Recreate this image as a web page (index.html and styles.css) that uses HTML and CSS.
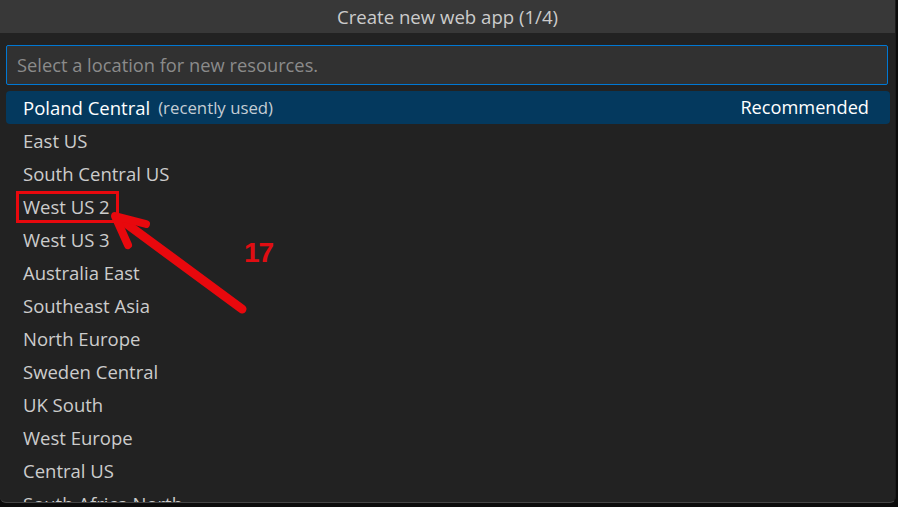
FILE: index.html
```html
<!DOCTYPE html>
<html>
<head>
<meta charset="utf-8">
<link rel="stylesheet" href="styles.css">
</head>
<body>
<div class="widget">
  <div class="title">Create new web app (1/4)</div>
  <div class="content">
    <div class="input">Select a location for new resources.</div>
    <ul class="list">
      <li class="item selected"><span class="label">Poland Central</span><span class="desc">(recently used)</span><span class="tag">Recommended</span></li>
      <li class="item">East US</li>
      <li class="item">South Central US</li>
      <li class="item">West US 2</li>
      <li class="item">West US 3</li>
      <li class="item">Australia East</li>
      <li class="item">Southeast Asia</li>
      <li class="item">North Europe</li>
      <li class="item">Sweden Central</li>
      <li class="item">UK South</li>
      <li class="item">West Europe</li>
      <li class="item">Central US</li>
      <li class="item">South Africa North</li>
    </ul>
  </div>
</div>
<div class="annot-box"></div>
<div class="annot-num">17</div>
<svg class="annot-arrow" width="898" height="507" viewBox="0 0 898 507">
  <line x1="242" y1="309" x2="120" y2="219" stroke="#e8080d" stroke-width="9" stroke-linecap="round"/>
  <polyline points="146,224 115,216 128,245" fill="none" stroke="#e8080d" stroke-width="8" stroke-linecap="round" stroke-linejoin="round"/>
</svg>
</body>
</html>
```
FILE: styles.css
```css
html, body {
  margin: 0;
  padding: 0;
  background: #0c0c0c;
  width: 898px;
  height: 507px;
  overflow: hidden;
  font-family: "Open Sans", "Noto Sans", sans-serif;
}
.widget {
  width: 896px;
  height: 503px;
  background: #222222;
  border-right: 1px solid #1c1c1c;
  border-bottom: 1px solid #454545;
  border-radius: 0 0 6px 6px;
  overflow: hidden;
  box-sizing: border-box;
}
.title {
  height: 33px;
  background: #383838;
  color: #cccccc;
  font-size: 18.6px;
  line-height: 33px;
  text-align: center;
}
.content {
  padding: 12px 5px 0 6px;
}
.input {
  height: 40px;
  margin-right: 2px;
  border: 1px solid #0078d4;
  border-radius: 2px;
  background: #313131;
  color: #8b8b8b;
  font-size: 18.3px;
  line-height: 38px;
  padding-left: 10px;
  box-sizing: border-box;
}
.list {
  list-style: none;
  margin: 6px 0 0 0;
  padding: 0;
}
.item {
  height: 33px;
  line-height: 33px;
  padding: 0 21px 0 17px;
  color: #cccccc;
  font-size: 18.5px;
  display: flex;
  align-items: center;
  white-space: nowrap;
}
.item.selected {
  background: #04395e;
  color: #ffffff;
  border-radius: 4px;
}
.desc {
  font-size: 16.8px;
  color: #c4cdd4;
  margin-left: 8px;
}
.tag {
  margin-left: auto;
  font-size: 18.2px;
}
.annot-box {
  position: absolute;
  left: 16px;
  top: 191px;
  width: 97px;
  height: 26px;
  border: 3px solid #e8080d;
}
.annot-num {
  position: absolute;
  left: 244px;
  top: 237px;
  color: #e00d12;
  font-family: "Liberation Sans", Arial, sans-serif;
  font-weight: bold;
  font-size: 28px;
  letter-spacing: -1px;
  line-height: 32px;
}
.annot-arrow {
  position: absolute;
  left: 0;
  top: 0;
  pointer-events: none;
}
```
